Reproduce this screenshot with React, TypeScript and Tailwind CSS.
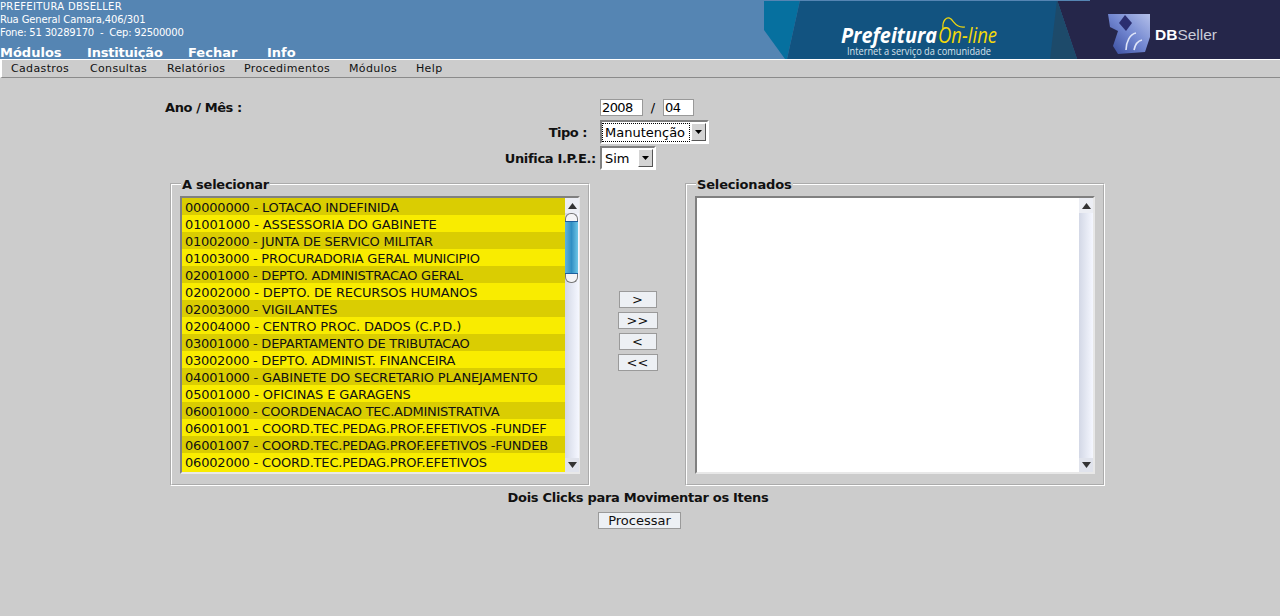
const dejavu = "font-['DejaVu_Sans',sans-serif]";

const loose = "tracking-[-0.12px]";
const mid = "tracking-[-0.19px]";
const tight = "tracking-[-0.25px]";

const items = [
  { label: "00000000 - LOTACAO INDEFINIDA", track: mid },
  { label: "01001000 - ASSESSORIA DO GABINETE", track: loose },
  { label: "01002000 - JUNTA DE SERVICO MILITAR", track: tight },
  { label: "01003000 - PROCURADORIA GERAL MUNICIPIO", track: tight },
  { label: "02001000 - DEPTO. ADMINISTRACAO GERAL", track: tight },
  { label: "02002000 - DEPTO. DE RECURSOS HUMANOS", track: loose },
  { label: "02003000 - VIGILANTES", track: mid },
  { label: "02004000 - CENTRO PROC. DADOS (C.P.D.)", track: loose },
  { label: "03001000 - DEPARTAMENTO DE TRIBUTACAO", track: tight },
  { label: "03002000 - DEPTO. ADMINIST. FINANCEIRA", track: tight },
  { label: "04001000 - GABINETE DO SECRETARIO PLANEJAMENTO", track: mid },
  { label: "05001000 - OFICINAS E GARAGENS", track: loose },
  { label: "06001000 - COORDENACAO TEC.ADMINISTRATIVA", track: tight },
  { label: "06001001 - COORD.TEC.PEDAG.PROF.EFETIVOS -FUNDEF", track: mid },
  { label: "06001007 - COORD.TEC.PEDAG.PROF.EFETIVOS -FUNDEB", track: mid },
  { label: "06002000 - COORD.TEC.PEDAG.PROF.EFETIVOS", track: mid },
];

const topLinks = [
  { label: "Módulos", className: "w-[87px]" },
  { label: "Instituição", className: "w-[101px] tracking-[-0.2px]" },
  { label: "Fechar", className: "w-[79px]" },
  { label: "Info", className: "" },
];

const menuLinks = [
  { label: "Cadastros", className: "w-[79px]" },
  { label: "Consultas", className: "w-[77px]" },
  { label: "Relatórios", className: "w-[77px]" },
  { label: "Procedimentos", className: "w-[105px]" },
  { label: "Módulos", className: "w-[67px]" },
  { label: "Help", className: "" },
];

function Banner() {
  return (
    <svg width="516" height="59" viewBox="0 0 516 59" className="block shrink-0">
      <defs>
        <linearGradient id="cube" x1="1" y1="0" x2="0" y2="1">
          <stop offset="0" stopColor="#b4c0ea" />
          <stop offset="0.5" stopColor="#7085cf" />
          <stop offset="1" stopColor="#34479a" />
        </linearGradient>
      </defs>
      <polygon points="0,0 36,0 23,59 21,59 0,30" fill="#06709f" />
      <polygon points="36,0 293,0 313,59 23,59" fill="#125380" />
      <polygon points="293,0 516,0 516,59 313,59" fill="#25264a" />
      <polygon points="293,0 313,59 286,59" fill="#1d4a6a" />
      <rect width="326" height="1" fill="#5585b3" />

      <text x="77" y="43" fontFamily="Open Sans" fontSize="22" fontWeight="700" fontStyle="italic" fill="#ffffff" textLength="96" lengthAdjust="spacingAndGlyphs">
        Prefeitura
      </text>
      <text x="174" y="43" fontFamily="Open Sans" fontSize="21" fontStyle="italic" fill="#f5d90a" textLength="59" lengthAdjust="spacingAndGlyphs">
        On-line
      </text>
      <path d="M179 29C178 20 183 16 187 19C191 23 193 28 201 27" stroke="#f5d90a" strokeWidth="1.2" fill="none" />
      <text x="83" y="55" fontFamily="Open Sans" fontSize="10" fill="#d8e2ea" textLength="144" lengthAdjust="spacingAndGlyphs">
        Internet a serviço da comunidade
      </text>

      <path d="M344 14H386V37L381 52L354 54L349 46L354 31L346 27Z" fill="url(#cube)" />
      <path d="M361 15L368 23L362 31L355 23Z" fill="#2b2e70" />
      <path d="M362 50C362 42 366 34 372 33M370 50C371 45 373 41 378 40" stroke="#dfe5f8" strokeWidth="1.6" fill="none" />

      <text x="391" y="40" fontFamily="Liberation Sans" fontSize="15.5">
        <tspan fontWeight="700" fill="#ffffff">DB</tspan>
        <tspan fill="#c9ccd8">Seller</tspan>
      </text>
    </svg>
  );
}

function Header() {
  return (
    <header className="flex h-[59px] justify-between bg-[#5585b3] text-white">
      <div className="flex flex-col">
        <div className="text-[10px] leading-[13px]">
          <p className="tracking-[0.33px]">PREFEITURA DBSELLER</p>
          <p className="tracking-[-0.12px]">Rua General Camara,406/301</p>
          <p className="whitespace-pre tracking-[-0.2px]">Fone: 51 30289170  -  Cep: 92500000</p>
        </div>
        <nav className="mt-[7px] flex text-[13px] leading-[14px] font-bold">
          {topLinks.map((link) => (
            <span key={link.label} className={link.className}>
              {link.label}
            </span>
          ))}
        </nav>
      </div>
      <Banner />
    </header>
  );
}

function MenuBar() {
  return (
    <nav className="flex h-[19px] border-t border-b border-t-white border-b-[#8a8a8a] border-l-2 border-l-white pl-[9px] text-[11px] leading-[17px] tracking-[0.35px] text-[#111]">
      {menuLinks.map((link) => (
        <span key={link.label} className={link.className}>
          {link.label}
        </span>
      ))}
    </nav>
  );
}

function SelectBox({ label, className, focused }: { label: string; className: string; focused?: boolean }) {
  return (
    <div className={`flex h-[24px] items-center border-2 border-t-[#808080] border-l-[#808080] border-r-white border-b-white bg-white pr-[1px] ${className}`}>
      <span className={`ml-[1px] flex-1 pl-[2px] text-[13px] leading-[17px] ${focused ? "outline-1 outline-dotted outline-black" : ""}`}>
        {label}
      </span>
      <span className="ml-[2px] flex h-[18px] w-[15px] items-center justify-center border border-t-white border-l-white border-r-[#555] border-b-[#555] bg-[#d4d4d4]">
        <svg width="7" height="4" viewBox="0 0 7 4">
          <polygon points="0,0 7,0 3.5,4" fill="#000" />
        </svg>
      </span>
    </div>
  );
}

function ScrollBar({ withThumb }: { withThumb?: boolean }) {
  return (
    <div className="flex h-full w-[14px] shrink-0 flex-col bg-gradient-to-r from-[#d3d8e6] to-[#f5f7ff]">
      <div className="flex h-[15px] items-center justify-center bg-[#eceef4]">
        <svg width="9" height="6" viewBox="0 0 9 6">
          <polygon points="4.5,0 9,6 0,6" fill="#333" />
        </svg>
      </div>
      <div className="flex-1">
        {withThumb && (
          <div className="flex h-[70px] w-[13px] flex-col overflow-hidden">
            <div className="h-[8px] rounded-t-[6px] border border-b-0 border-[#777] bg-[#f4f4f6]" />
            <div className="h-[53px] border-y border-[#1c5f9e] bg-gradient-to-r from-[#5fb4dc] via-[#2f8fc4] to-[#6cc6e6]" />
            <div className="h-[9px] rounded-b-[6px] border border-t-0 border-[#777] bg-[#f4f4f6]" />
          </div>
        )}
      </div>
      <div className="flex h-[14px] items-center justify-center bg-[#e0e3ec]">
        <svg width="9" height="6" viewBox="0 0 9 6">
          <polygon points="0,0 9,0 4.5,6" fill="#333" />
        </svg>
      </div>
    </div>
  );
}

function GroupBox({ title, titleClass, children }: { title: string; titleClass: string; children: React.ReactNode }) {
  return (
    <fieldset className="h-[309px] w-[420px] border-2 border-white [border-style:groove] px-[8px]">
      <legend className={`relative top-[1px] ml-[1px] px-[1px] text-[13px] leading-[14px] font-bold text-[#111] ${titleClass}`}>{title}</legend>
      <div className="mt-[5px] flex h-[278px] w-[400px] border-2 border-t-[#808080] border-l-[#808080] border-r-[#e8e8e8] border-b-[#e8e8e8] bg-white">
        {children}
      </div>
    </fieldset>
  );
}

function MoveButton({ label, className }: { label: string; className: string }) {
  return (
    <button className={`h-[17px] border border-[#9a9a9a] bg-[#edf0f4] text-[13px] leading-[15px] text-[#111] ${className}`}>
      {label}
    </button>
  );
}

export default function App() {
  return (
    <div className={`h-[616px] overflow-hidden bg-[#cccccc] text-black ${dejavu}`}>
      <Header />
      <MenuBar />

      <main className="pl-[165px] pt-[21px]">
        <div className="flex h-[17px] items-center">
          <span className="w-[435px] text-[13px] font-bold tracking-[-0.4px] text-[#111]">Ano / Mês :</span>
          <input readOnly value="2008" className="h-[17px] w-[43px] border border-[#999] bg-white px-[1px] text-[13px] leading-[15px] tracking-[-0.6px]" />
          <span className="w-[20px] text-center text-[13px]">/</span>
          <input readOnly value="04" className="h-[17px] w-[31px] border border-[#999] bg-white px-[1px] text-[13px] leading-[15px] tracking-[-0.6px]" />
        </div>

        <div className="mt-[4px] flex h-[24px] items-center">
          <span className="w-[423px] pt-[1px] pr-[1px] text-right text-[13px] font-bold tracking-[-0.5px] text-[#111]">Tipo :</span>
          <SelectBox label="Manutenção" className="ml-[12px] w-[109px]" focused />
        </div>

        <div className="mt-[2px] flex h-[24px] items-center">
          <span className="w-[431px] pt-[1px] text-right text-[13px] font-bold tracking-[-0.33px] text-[#111]">Unifica I.P.E.:</span>
          <SelectBox label="Sim" className="ml-[4px] w-[56px]" />
        </div>

        <div className="mt-[7px] ml-[5px] flex items-start">
          <GroupBox title="A selecionar" titleClass="tracking-[-0.25px]">
            <ul className="w-[383px] shrink-0 bg-[#f9ec00] text-[13px] leading-[19px] text-[#111]">
              {items.map((item, i) => (
                <li
                  key={item.label}
                  className={`h-[17px] whitespace-nowrap pl-[3px] ${item.track} ${i % 2 === 0 ? "bg-[#dacd02]" : "bg-[#f9ec00]"}`}
                >
                  {item.label}
                </li>
              ))}
            </ul>
            <ScrollBar withThumb />
          </GroupBox>

          <div className="mt-[114px] flex w-[95px] flex-col items-center gap-[4px]">
            <MoveButton label=">" className="w-[38px]" />
            <MoveButton label=">>" className="w-[40px]" />
            <MoveButton label="<" className="w-[38px]" />
            <MoveButton label="<<" className="w-[40px]" />
          </div>

          <GroupBox title="Selecionados" titleClass="tracking-[-0.17px]">
            <div className="flex-1" />
            <ScrollBar />
          </GroupBox>
        </div>

        <p className="mt-[4px] w-[946px] text-center text-[13px] leading-[16px] font-bold tracking-[-0.3px] text-[#111]">
          Dois Clicks para Movimentar os Itens
        </p>
        <div className="mt-[2px] w-[949px] text-center">
          <button className="h-[17px] w-[83px] border border-[#9a9a9a] bg-[#edf0f4] text-[13px] leading-[15px] text-[#111]">
            Processar
          </button>
        </div>
      </main>
    </div>
  );
}
